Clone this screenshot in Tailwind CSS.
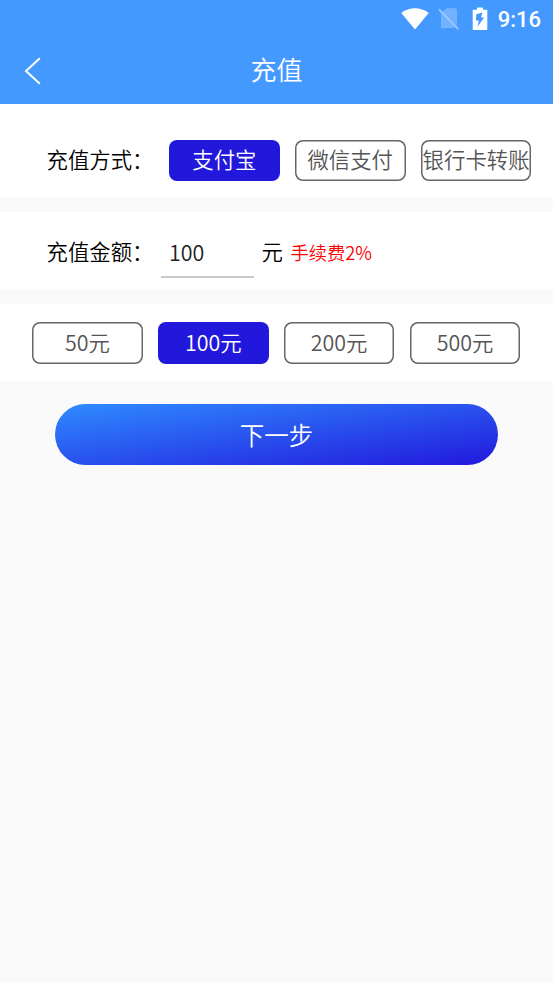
<!DOCTYPE html>
<html lang="zh-CN">
<head>
<meta charset="utf-8">
<title>充值</title>
<script src="https://cdn.jsdelivr.net/npm/@tailwindcss/browser@4"></script>
</head>
<body class="h-[983px] overflow-hidden bg-[#fafafa] font-['Noto_Sans_CJK_SC',sans-serif] text-[21.4px] font-[350] leading-[32px] text-black">
<header class="h-[104.4px] bg-[#4499ff] text-white">
  <div class="flex h-[38px] items-center justify-end pr-[12px]">
    <svg class="mr-[9px] h-[22px] w-[28px]" viewBox="0 0 28 22" fill="#fff"><path d="M0.3 5C8.5-1.2 19.5-1.2 27.7 5L14 21.5Z"/></svg>
    <svg class="mr-[12px] h-[24px] w-[22px]" viewBox="0 0 22 24"><path d="M8.8 1.5H17.2Q18.8 1.5 18.8 3V17.5L5.2 4.6ZM3 7.2L16.3 21H4.5Q3 21 3 19.5Z" fill="#82bbff"/><path d="M5.2 4.6L8.8 1.5H17.2Q18.8 1.5 18.8 3V20.2H4.5Q3 20.2 3 19V7Z" fill="#72b1ff"/><path d="M1 2.5L20.5 22.3" stroke="#9ac8ff" stroke-width="1.8"/></svg>
    <svg class="mr-[10px] h-[24px] w-[16px]" viewBox="0 0 16 24"><path d="M5 .5H11V2.7H15.3V22.3Q15.3 23 14.6 23H1.4Q.7 23 .7 22.3V2.7H5Z" fill="#fff"/><path d="M10.5 5.5L4.3 7.2L3.9 13.5H6.8L5.4 19.8L12.2 10.5H9Z" fill="#4499ff"/></svg>
    <span class="pt-[1px] font-[Roboto] text-[22px] font-medium leading-[24px]">9:16</span>
  </div>
  <div class="grid h-[66px] grid-cols-[60px_1fr_60px] items-center">
    <svg class="ml-[23px] h-[28px] w-[20px]" viewBox="0 0 20 28" fill="none" stroke="#fff" stroke-width="2"><path d="M16.8 1.2L3 14L16.8 26.8"/></svg>
    <h1 class="pb-[5px] text-center text-[26px] font-[350] leading-[36px]">充值</h1>
  </div>
</header>
<main>
  <section class="flex h-[92.6px] bg-white pl-[46.5px] pt-[35.6px]">
    <span class="w-[122.5px] shrink-0 pt-[3px]">充值方式：</span>
    <div class="flex gap-[15.2px] whitespace-nowrap text-[#555]">
      <button class="flex h-[41px] w-[110.7px] justify-center rounded-[8px] bg-[#2218dc] pt-[3px] text-white">支付宝</button>
      <button class="flex h-[41px] w-[110.7px] justify-center rounded-[8px] pt-[3px] shadow-[inset_0_0_0_1.5px_#666]">微信支付</button>
      <button class="flex h-[41px] w-[110.7px] justify-center rounded-[8px] pt-[3px] shadow-[inset_0_0_0_1.5px_#666]">银行卡转账</button>
    </div>
  </section>
  <section class="mt-[15px] flex h-[77px] bg-white pl-[46.5px]">
    <span class="w-[114.5px] shrink-0 pt-[23px]">充值金额：</span>
    <div class="h-[66px] w-[92.5px] border-b-2 border-[#c8c8c8] pl-[8px] pt-[24px] text-[#222]">100</div>
    <span class="ml-[8px] pt-[23px]">元</span>
    <span class="ml-[7.5px] pt-[24px] text-[18.3px] text-[#ff0000]">手续费2%</span>
  </section>
  <section class="mt-[15px] flex h-[77px] gap-[15.2px] bg-white pl-[32px] pt-[18.5px] text-[#555]">
    <button class="flex h-[41.3px] w-[110.7px] justify-center rounded-[8px] pt-[4px] shadow-[inset_0_0_0_1.5px_#666]">50元</button>
    <button class="flex h-[41.3px] w-[110.7px] justify-center rounded-[8px] bg-[#2218dc] pt-[4px] text-white">100元</button>
    <button class="flex h-[41.3px] w-[110.7px] justify-center rounded-[8px] pt-[4px] shadow-[inset_0_0_0_1.5px_#666]">200元</button>
    <button class="flex h-[41.3px] w-[110.7px] justify-center rounded-[8px] pt-[4px] shadow-[inset_0_0_0_1.5px_#666]">500元</button>
  </section>
  <button class="mx-auto mt-[23px] flex h-[61.3px] w-[443px] items-center justify-center rounded-full bg-[linear-gradient(to_bottom_right,#2f8bff,#2218dc)] text-[24.5px] text-white">下一步</button>
</main>
</body>
</html>
